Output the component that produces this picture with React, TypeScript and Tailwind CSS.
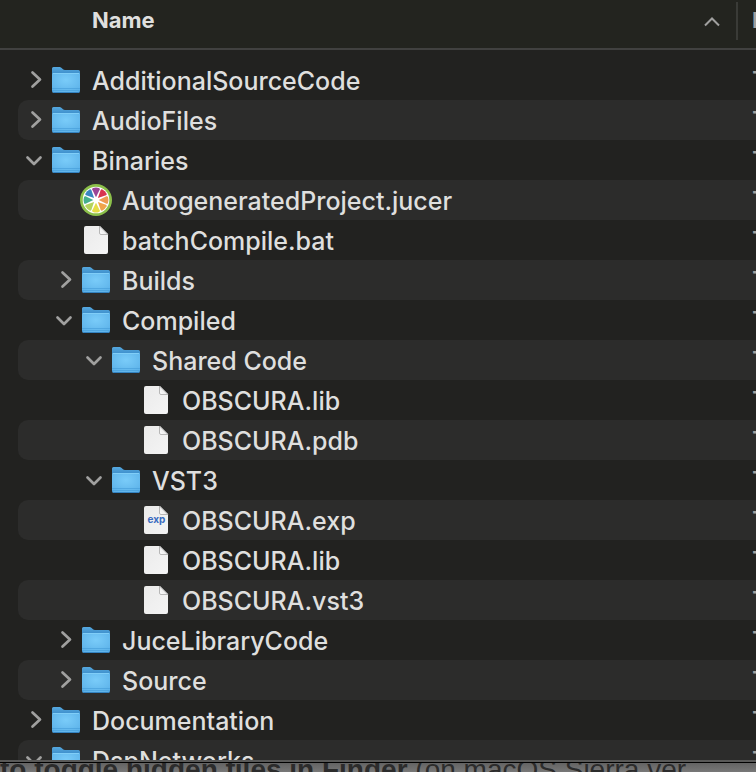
type Kind = 'folder' | 'doc' | 'exp' | 'jucer';

type Entry = {
  name: string;
  kind: Kind;
  depth: number;
  open?: boolean;
};

const entries: Entry[] = [
  { name: 'AdditionalSourceCode', kind: 'folder', depth: 0 },
  { name: 'AudioFiles', kind: 'folder', depth: 0 },
  { name: 'Binaries', kind: 'folder', depth: 0, open: true },
  { name: 'AutogeneratedProject.jucer', kind: 'jucer', depth: 1 },
  { name: 'batchCompile.bat', kind: 'doc', depth: 1 },
  { name: 'Builds', kind: 'folder', depth: 1 },
  { name: 'Compiled', kind: 'folder', depth: 1, open: true },
  { name: 'Shared Code', kind: 'folder', depth: 2, open: true },
  { name: 'OBSCURA.lib', kind: 'doc', depth: 3 },
  { name: 'OBSCURA.pdb', kind: 'doc', depth: 3 },
  { name: 'VST3', kind: 'folder', depth: 2, open: true },
  { name: 'OBSCURA.exp', kind: 'exp', depth: 3 },
  { name: 'OBSCURA.lib', kind: 'doc', depth: 3 },
  { name: 'OBSCURA.vst3', kind: 'doc', depth: 3 },
  { name: 'JuceLibraryCode', kind: 'folder', depth: 1 },
  { name: 'Source', kind: 'folder', depth: 1 },
  { name: 'Documentation', kind: 'folder', depth: 0 },
  { name: 'DspNetworks', kind: 'folder', depth: 0, open: true },
];

const indents = ['pl-[7px]', 'pl-[37px]', 'pl-[67px]', 'pl-[97px]'];

// clockwise from the top
const slices = [
  '#9b4597',
  '#d8344f',
  '#ee9a52',
  '#f0a44b',
  '#e6dd45',
  '#b4d35c',
  '#45b08c',
  '#3a86c0',
];

function FolderIcon() {
  return (
    <svg className="h-8 w-8" viewBox="0 0 32 32" aria-hidden="true">
      <defs>
        <linearGradient id="folderBack" x1="0" y1="0" x2="0" y2="1">
          <stop offset="0" stopColor="#56a9e0" />
          <stop offset="1" stopColor="#3585c3" />
        </linearGradient>
        <radialGradient id="folderFront" cx="0.5" cy="0.35" r="0.75">
          <stop offset="0" stopColor="#7accf9" />
          <stop offset="1" stopColor="#5ab0e8" />
        </radialGradient>
      </defs>
      <path d="M2 4.500Q2 3 3.500 3H9.500Q10.500 3 11.300 3.800L13 5.300Q13.700 6 15 6H28.500Q30 6 30 7.500V12H2Z" fill="url(#folderBack)" />
      <path d="M2 10Q2 9 3 9H29Q30 9 30 10V27Q30 29 28 29H4Q2 29 2 27Z" fill="url(#folderFront)" />
      <path d="M3 9.500H29" stroke="#80cef8" />
      <path d="M2 24.500H30M2 26.500H30" stroke="#4199d6" opacity="0.55" />
      <path d="M2.500 27.500Q3 28.500 4 28.500H28Q29 28.500 29.500 27.500" fill="none" stroke="#3483c1" />
    </svg>
  );
}

function DocIcon({ label }: { label?: string }) {
  return (
    <svg className="h-8 w-8" viewBox="0 0 32 32" aria-hidden="true">
      <defs>
        <linearGradient id="paper" x1="0" y1="0" x2="1" y2="1">
          <stop offset="0" stopColor="#ebebeb" />
          <stop offset="1" stopColor="#f4f4f4" />
        </linearGradient>
        <linearGradient id="fold" x1="0" y1="1" x2="1" y2="0">
          <stop offset="0" stopColor="#ffffff" />
          <stop offset="1" stopColor="#d8d8d8" />
        </linearGradient>
      </defs>
      <path d="M4 4Q4 2 6 2H20L28 10V28Q28 30 26 30H6Q4 30 4 28Z" fill="url(#paper)" />
      <path d="M19.500 2V9Q19.500 10.500 21 10.500H28Z" fill="url(#fold)" stroke="#9c9c9c" strokeWidth="0.700" />
      {label && (
        <text x="16.500" y="19" textAnchor="middle" fontSize="10" fontWeight="700" fill="#3a6cc0">
          {label}
        </text>
      )}
    </svg>
  );
}

function JucerIcon() {
  return (
    <svg className="h-8 w-8" viewBox="0 0 32 32" aria-hidden="true">
      <circle cx="16" cy="16" r="16" fill="#8cc04a" />
      <circle cx="16" cy="16" r="13.300" fill="#fff" />
      {slices.map((color, i) => (
        <path
          key={color}
          d="M16 13.300L12.200 5.600Q11.900 4.500 13 4Q16 3 19 4Q20.100 4.500 19.800 5.600Z"
          fill={color}
          transform={`rotate(${i * 45} 16 16)`}
        />
      ))}
    </svg>
  );
}

function EntryIcon({ kind }: { kind: Kind }) {
  if (kind === 'folder') return <FolderIcon />;
  if (kind === 'jucer') return <JucerIcon />;
  return <DocIcon label={kind === 'exp' ? 'exp' : undefined} />;
}

function Disclosure({ name, open }: { name: string; open?: boolean }) {
  return (
    <button type="button" className="h-5 w-5 text-[#a0a09f]" aria-expanded={!!open} aria-label={`Toggle ${name}`}>
      <svg className="h-5 w-5" viewBox="0 0 20 20" fill="none" stroke="currentColor">
        <path
          d={open ? 'M2.500 7.500L9 14L15.500 7.500' : 'M7.500 2.500L15 9.500L7.500 16.500'}
          strokeLinecap="round"
          strokeLinejoin="round"
          strokeWidth="2.700"
        />
      </svg>
    </button>
  );
}

function EntryRow({ entry, striped }: { entry: Entry; striped: boolean }) {
  const stripe = striped ? 'bg-[#2c2c2b]' : '';

  return (
    <tr>
      <td className="p-0">
        <div
          className={`ml-[18px] flex h-10 items-center overflow-hidden rounded-l-[10px] ${indents[entry.depth]} ${stripe}`}
        >
          <div className="mr-[5px] flex h-5 w-5 shrink-0">
            {entry.kind === 'folder' && <Disclosure name={entry.name} open={entry.open} />}
          </div>
          <div className="mr-[10px] shrink-0">
            <EntryIcon kind={entry.kind} />
          </div>
          <span className="pt-[2px] whitespace-nowrap">{entry.name}</span>
        </div>
      </td>
      <td className={`overflow-hidden p-0 text-[#a0a09f] ${stripe}`}>
        <div className="h-10 overflow-hidden pt-[1px] pl-4">T</div>
      </td>
    </tr>
  );
}

export default function App() {
  return (
    <div className="flex h-screen flex-col overflow-hidden bg-[#707070]">
      <main className="min-h-0 flex-1 overflow-hidden border-b-2 border-[#595958] bg-[#222220] font-['Inter',sans-serif] text-[25px] leading-10 font-medium text-[#dfdfde]">
        <table className="w-full table-fixed border-separate border-spacing-0">
          <colgroup>
            <col />
            <col className="w-5" />
          </colgroup>
          <thead>
            <tr className="text-left text-[22px] font-semibold">
              <th className="p-0 pb-[10px]" aria-sort="ascending">
                <button
                  type="button"
                  className="flex h-[50px] w-full items-start justify-between border-b-2 border-[#414140] bg-[#23241f] pr-4 pl-[92px]"
                >
                  Name
                  <svg className="mt-[14px] h-4 w-4" viewBox="0 0 16 16" fill="none" stroke="#a0a09f" aria-hidden="true">
                    <path d="M1 11.500L8 4.500L15 11.500" strokeWidth="2" />
                  </svg>
                </button>
              </th>
              <th className="overflow-hidden p-0 pb-[10px]">
                <div className="h-[50px] border-b-2 border-[#414140] bg-[#23241f] pt-[2px]">
                  <div className="h-[38px] border-l-2 border-[#3a3b37] pl-[14px] leading-9 text-[#a0a09f]">D</div>
                </div>
              </th>
            </tr>
          </thead>
          <tbody>
            {entries.map((entry, i) => (
              <EntryRow key={i} entry={entry} striped={i % 2 === 1} />
            ))}
          </tbody>
        </table>
      </main>
      <footer className="flex h-[10px] shrink-0 items-center overflow-hidden border-t border-black bg-linear-to-b from-[#636363] to-[#787878] pt-1 font-['Liberation_Sans',sans-serif] text-[28px] leading-10 whitespace-nowrap text-[#2c2c2c]">
        <p>
          <strong>to toggle hidden files in Finder</strong> (on macOS Sierra ver
        </p>
      </footer>
    </div>
  );
}
